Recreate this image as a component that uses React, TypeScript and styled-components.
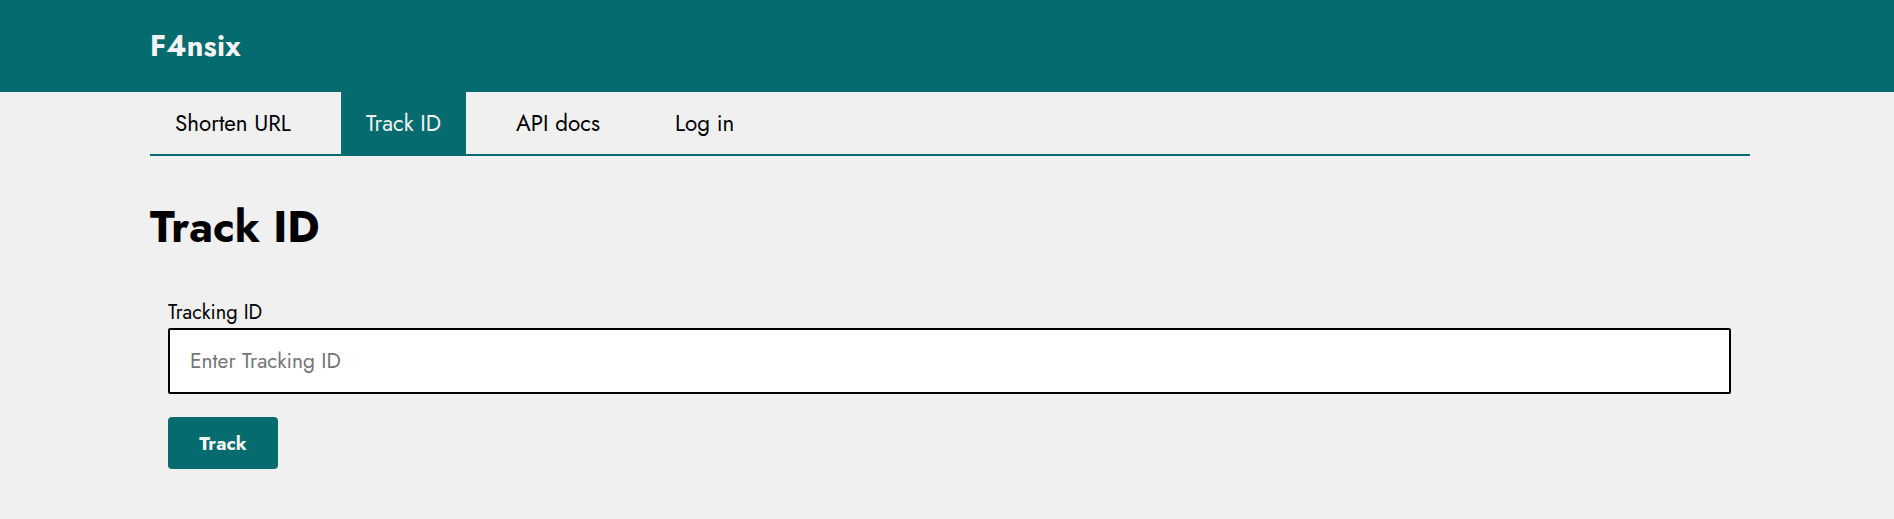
import React from "react";
import styled, { createGlobalStyle } from "styled-components";

const TEAL = "#056b6e";
const FONT = `"Jost", "Lato", "Liberation Sans", sans-serif`;

const GlobalStyle = createGlobalStyle`
  html, body {
    margin: 0;
    padding: 0;
    background: #f0f0f0;
    font-family: ${FONT};
    color: #000;
  }
  * { box-sizing: border-box; }
`;

const Header = styled.header`
  height: 92px;
  background: ${TEAL};
  display: flex;
  align-items: center;
  padding-left: 150px;
`;

const Logo = styled.div`
  color: #f4f4f4;
  font-weight: 700;
  font-size: 29px;
  line-height: 1;
  letter-spacing: 0.2px;
`;

const Container = styled.main`
  width: 1600px;
  margin-left: 150px;
`;

const Nav = styled.nav`
  display: flex;
  gap: 25px;
  height: 64px;
  border-bottom: 2px solid ${TEAL};
`;

const Tab = styled.a<{ $active?: boolean }>`
  display: flex;
  align-items: center;
  padding: 0 25px;
  font-size: 22.4px;
  color: ${(p) => (p.$active ? "#f2f2f2" : "#000")};
  background: ${(p) => (p.$active ? TEAL : "transparent")};
  text-decoration: none;
  cursor: pointer;
`;

const Title = styled.h1`
  margin: 44px 0 0;
  font-size: 44px;
  line-height: 55px;
  font-weight: 700;
`;

const Form = styled.form`
  display: flex;
  flex-direction: column;
  align-items: flex-start;
  padding: 0 19px 0 18px;
  margin-top: 46px;
`;

const Label = styled.label`
  font-size: 20px;
  line-height: 24px;
  margin-bottom: 3px;
`;

const Input = styled.input`
  width: 100%;
  height: 66px;
  border: 2px solid #000;
  border-radius: 2px;
  background: #fff;
  padding: 0 20px;
  font-family: ${FONT};
  font-size: 21px;
  outline: none;
  &::placeholder {
    color: #757575;
  }
`;

const Button = styled.button`
  margin-top: 23px;
  width: 110px;
  height: 52px;
  border: none;
  border-radius: 4px;
  background: ${TEAL};
  color: #f4f4f4;
  font-family: ${FONT};
  font-weight: 700;
  font-size: 19px;
  cursor: pointer;
`;

export default function App() {
  return (
    <>
      <GlobalStyle />
      <Header>
        <Logo>F4nsix</Logo>
      </Header>
      <Container>
        <Nav>
          <Tab>Shorten URL</Tab>
          <Tab $active>Track ID</Tab>
          <Tab>API docs</Tab>
          <Tab>Log in</Tab>
        </Nav>
        <Title>Track ID</Title>
        <Form onSubmit={(e) => e.preventDefault()}>
          <Label htmlFor="tracking-id">Tracking ID</Label>
          <Input id="tracking-id" placeholder="Enter Tracking ID" />
          <Button type="submit">Track</Button>
        </Form>
      </Container>
    </>
  );
}
